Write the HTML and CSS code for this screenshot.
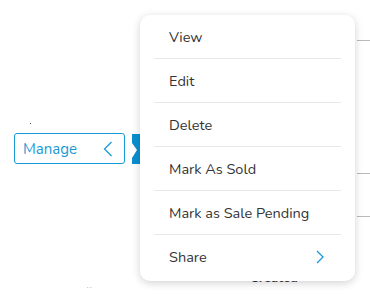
FILE: index.html
```html
<!DOCTYPE html>
<html>
<head>
    <title>Listing actions</title>
    <link rel="stylesheet" href="styles.css">
</head>
<body>
    <div class="stage">
        <div class="left-col">
            <span class="dot dot-a"></span>
            <div class="manage-row">
                <button class="manage-btn">
                    <span>Manage</span>
                    <svg width="10" height="16" viewBox="0 0 10 16"><path d="M8.5 1 L1.5 8 L8.5 15" fill="none" stroke="#1a9ad6" stroke-width="1.3"/></svg>
                </button>
                <svg class="tab" width="8" height="30" viewBox="0 0 8 30"><path d="M0 0 H8 V30 H0 V24 L5 16 L0 9 Z" fill="#0a8fd0"/></svg>
            </div>
            <span class="dots">. .</span>
        </div>
        <div class="mid-col">
            <span class="created">Created</span>
        </div>
        <div class="right-col">
            <div class="rule rule-1"></div>
            <div class="rule rule-2"></div>
            <div class="rule rule-3"></div>
        </div>

        <ul class="menu">
            <li class="item">View</li>
            <li class="item">Edit</li>
            <li class="item">Delete</li>
            <li class="item">Mark As Sold</li>
            <li class="item">Mark as Sale Pending</li>
            <li class="item item-sub">
                <span>Share</span>
                <svg width="8" height="14" viewBox="0 0 8 14"><path d="M1 1 L7 7 L1 13" fill="none" stroke="#1a9ad6" stroke-width="1.3"/></svg>
            </li>
        </ul>
    </div>
</body>
</html>
```

FILE: styles.css
```css
body {
    margin: 0;
    background-color: #ffffff;
    font-family: "Nunito", Lato, "Open Sans", sans-serif;
    color: #333333;
}
.stage {
    position: relative;
    width: 370px;
    height: 298px;
    overflow: hidden;
    display: grid;
    grid-template-columns: 140px 217px 13px;
}
.left-col {
    display: flex;
    flex-direction: column;
    padding-left: 14px;
}
.dot {
    display: block;
    width: 1px;
    height: 1px;
    background-color: #555;
}
.dot-a {
    margin: 123px 0 0 16px;
}
.manage-row {
    display: flex;
    align-items: flex-start;
    gap: 7px;
    margin-top: 9px;
}
.manage-btn {
    box-sizing: border-box;
    flex-shrink: 0;
    display: flex;
    align-items: center;
    justify-content: space-between;
    width: 111px;
    height: 31px;
    padding: 0 11px 0 8px;
    border: 1px solid #1a9ad6;
    border-radius: 3px;
    background-color: #ffffff;
    color: #1a9ad6;
    font-family: inherit;
    font-size: 15px;
}
.tab {
    flex-shrink: 0;
    margin-top: 1px;
}
.dots {
    margin: 119px 0 0 73px;
    font-size: 6px;
    line-height: 6px;
    color: #444;
}
.mid-col {
    display: flex;
    flex-direction: column;
    justify-content: flex-end;
    padding: 0 0 13px 110px;
}
.created {
    font-size: 13px;
    line-height: 13px;
    font-weight: bold;
    color: #333;
}
.right-col {
    display: flex;
    flex-direction: column;
}
.rule {
    border-top: 1px solid #b9b9b9;
}
.rule-1 {
    margin-top: 40px;
}
.rule-2 {
    margin-top: 132px;
}
.rule-3 {
    margin-top: 42px;
}
.menu {
    position: absolute;
    left: 140px;
    top: 15px;
    width: 215px;
    margin: 0;
    padding: 0 0 2px 0;
    list-style: none;
    background-color: #ffffff;
    border-radius: 10px;
    box-shadow: 0 2px 8px rgba(0, 0, 0, 0.18);
}
.item {
    display: flex;
    align-items: center;
    justify-content: space-between;
    height: 43px;
    margin: 0 14px;
    padding: 0 17px 0 15px;
    border-bottom: 1px solid #e8e8e8;
    font-size: 14.5px;
    color: #333333;
}
.item-sub {
    border-bottom: none;
    height: 44px;
}
```
